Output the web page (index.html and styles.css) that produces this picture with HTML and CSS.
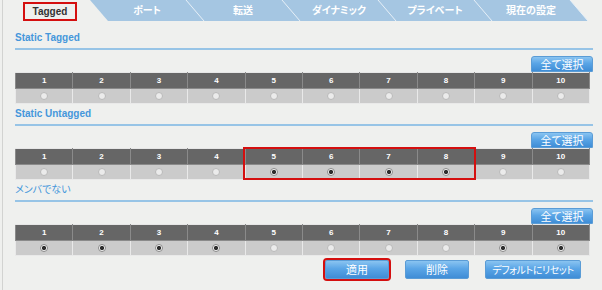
FILE: index.html
```html
<!DOCTYPE html>
<html lang="ja">
<head>
  <meta charset="UTF-8" />
  <title>VLAN Tagged</title>
  <link rel="stylesheet" href="styles.css">
</head>
<body>
  <div class="frame">
    <!-- タブ -->
    <div class="tabs">
      <div class="tab active">Tagged</div>
      <div class="tab-strip">
        <div class="tab">ポート</div>
        <div class="tab">転送</div>
        <div class="tab">ダイナミック</div>
        <div class="tab">プライベート</div>
        <div class="tab">現在の設定</div>
      </div>
    </div>

    <div class="content">
      <!-- Static Tagged -->
      <div class="section">
        <div class="section-title">Static Tagged</div>
        <div class="btn-row"><button class="btn small">全て選択</button></div>
        <table class="ports">
          <tr><th>1</th><th>2</th><th>3</th><th>4</th><th>5</th><th>6</th><th>7</th><th>8</th><th>9</th><th>10</th></tr>
          <tr>
            <td><span class="radio"></span></td><td><span class="radio"></span></td><td><span class="radio"></span></td><td><span class="radio"></span></td><td><span class="radio"></span></td>
            <td><span class="radio"></span></td><td><span class="radio"></span></td><td><span class="radio"></span></td><td><span class="radio"></span></td><td><span class="radio"></span></td>
          </tr>
        </table>
      </div>

      <!-- Static Untagged -->
      <div class="section">
        <div class="section-title">Static Untagged</div>
        <div class="btn-row"><button class="btn small">全て選択</button></div>
        <div class="table-wrap">
          <table class="ports">
            <tr><th>1</th><th>2</th><th>3</th><th>4</th><th>5</th><th>6</th><th>7</th><th>8</th><th>9</th><th>10</th></tr>
            <tr>
              <td><span class="radio"></span></td><td><span class="radio"></span></td><td><span class="radio"></span></td><td><span class="radio"></span></td><td><span class="radio on"></span></td>
              <td><span class="radio on"></span></td><td><span class="radio on"></span></td><td><span class="radio on"></span></td><td><span class="radio"></span></td><td><span class="radio"></span></td>
            </tr>
          </table>
          <div class="highlight"></div>
        </div>
      </div>

      <!-- メンバでない -->
      <div class="section">
        <div class="section-title jp">メンバでない</div>
        <div class="btn-row"><button class="btn small">全て選択</button></div>
        <table class="ports">
          <tr><th>1</th><th>2</th><th>3</th><th>4</th><th>5</th><th>6</th><th>7</th><th>8</th><th>9</th><th>10</th></tr>
          <tr>
            <td><span class="radio on"></span></td><td><span class="radio on"></span></td><td><span class="radio on"></span></td><td><span class="radio on"></span></td><td><span class="radio"></span></td>
            <td><span class="radio"></span></td><td><span class="radio"></span></td><td><span class="radio"></span></td><td><span class="radio on"></span></td><td><span class="radio on"></span></td>
          </tr>
        </table>
      </div>

      <!-- 操作ボタン -->
      <div class="actions">
        <button class="btn action marked">適用</button>
        <button class="btn action">削除</button>
        <button class="btn action wide">デフォルトにリセット</button>
      </div>
    </div>
  </div>
</body>
</html>
```

FILE: styles.css
```css
/* 全体 */
html, body {
  margin: 0;
  padding: 0;
  background: #eff0ee;
  font-family: "Liberation Sans", "Noto Sans CJK JP", sans-serif;
  width: 602px;
  height: 290px;
  overflow: hidden;
}
.frame {
  margin-left: 2px;
  height: 290px;
  border-left: 1px solid #d2d3d1;
}

/* タブ */
.tabs {
  display: flex;
  height: 21px;
}
.tab {
  font-size: 10px;
  font-weight: bold;
  font-feature-settings: "palt";
  color: #fff;
  width: 96px;
  text-align: center;
  line-height: 21px;
}
.tab.active {
  box-sizing: border-box;
  width: 54px;
  height: 19px;
  margin: 2px 0 0 20px;
  line-height: 15px;
  color: #333;
  border: 2px solid #d40f0f;
}
.tab-strip {
  display: flex;
  width: 498px;
  height: 21px;
  margin-left: 13px;
  padding-left: 9px;
  box-sizing: border-box;
  background: url("data:image/svg+xml,%3Csvg xmlns='http://www.w3.org/2000/svg' width='498' height='21'%3E%3Cpolygon points='0,0 480,0 498,21 18,21' fill='%23a5c6e2'/%3E%3Cg stroke='%23e6eff7' stroke-width='1'%3E%3Cline x1='96' y1='0' x2='114' y2='21'/%3E%3Cline x1='192' y1='0' x2='210' y2='21'/%3E%3Cline x1='288' y1='0' x2='306' y2='21'/%3E%3Cline x1='384' y1='0' x2='402' y2='21'/%3E%3Cline x1='480' y1='0' x2='498' y2='21'/%3E%3C/g%3E%3C/svg%3E") no-repeat;
}

/* 本体 */
.content {
  padding: 0 9px 0 12px;
}
.section-title {
  margin-top: 10px;
  font-size: 10px;
  font-weight: bold;
  line-height: 14px;
  color: #4597db;
  padding-bottom: 3px;
  border-bottom: 2px solid #97c4e6;
}
.section + .section .section-title {
  margin-top: 3px;
}
.section-title.jp {
  font-weight: normal;
  font-size: 10px;
  font-feature-settings: "palt";
}
.btn-row {
  display: flex;
  justify-content: flex-end;
  margin-top: 6px;
}

/* ボタン */
.btn {
  font-family: "Noto Sans CJK JP", sans-serif;
  font-feature-settings: "palt";
  color: #fff;
  border: 1px solid #5a9cd6;
  border-radius: 2px;
  background: linear-gradient(to bottom, #8ac4f1 0%, #5aa5e6 45%, #3f8dd6 100%);
  padding: 0;
  white-space: nowrap;
  cursor: pointer;
}
.btn.small {
  width: 62px;
  height: 16px;
  font-size: 11px;
  line-height: 14px;
  border-radius: 3px 3px 0 0;
}

/* ポート表 */
.table-wrap {
  position: relative;
}
.ports {
  width: 575px;
  border-collapse: collapse;
  table-layout: fixed;
}
.ports th {
  height: 15px;
  padding: 0;
  background: #666;
  color: #fff;
  font-size: 8px;
  font-weight: bold;
  border: 1px solid #8a8a8a;
  border-top-color: #e6e6e6;
}
.ports td {
  height: 14px;
  padding: 0;
  background: #cbcbcb;
  text-align: center;
  border: 1px solid #e9e9e9;
  line-height: 0;
}
.radio {
  display: inline-block;
  box-sizing: border-box;
  width: 8px;
  height: 8px;
  border-radius: 50%;
  background: #ebebeb;
  border: 1px solid #b9b9b9;
}
.radio.on {
  background: radial-gradient(circle, #2e2e2e 0 1.8px, #f4f4f4 2.4px);
  border-color: #8a8a8a;
}
.highlight {
  position: absolute;
  left: 228px;
  top: -1px;
  width: 233px;
  height: 33px;
  border: 2px solid #d40f0f;
  box-sizing: border-box;
}

/* 操作ボタン */
.actions {
  display: flex;
  justify-content: flex-end;
  gap: 16px;
  margin: 4px 12px 0 0;
}
.btn.action {
  width: 64px;
  height: 19px;
  font-size: 11px;
  line-height: 17px;
}
.btn.action.wide {
  width: 96px;
  font-size: 10px;
  letter-spacing: -0.4px;
}
.btn.marked {
  outline: 2px solid #d40f0f;
  outline-offset: 0;
}
```
